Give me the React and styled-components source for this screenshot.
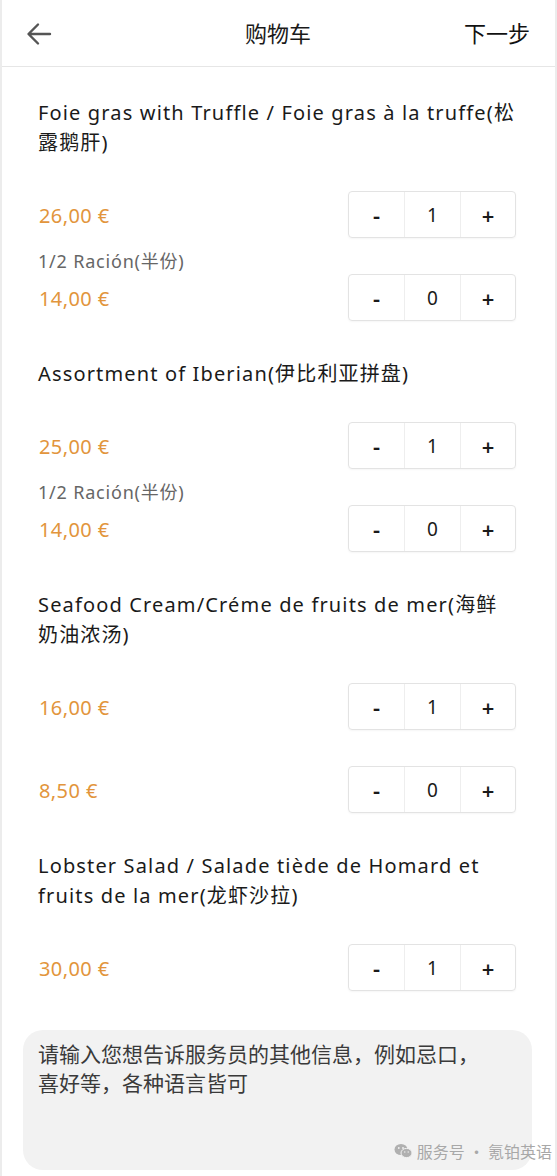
import React from "react";
import styled, { createGlobalStyle } from "styled-components";

const Global = createGlobalStyle`
  html, body { margin: 0; padding: 0; background: #fff; }
  body { font-family: "Noto Sans", "Noto Sans CJK SC", sans-serif; color: #1a1a1a; }
  * { box-sizing: border-box; }
`;

const Page = styled.div`
  width: 557px;
  min-height: 1176px;
  background: #fff;
  border-left: 2px solid #ececec;
  border-right: 2px solid #ececec;
  position: relative;
  display: flex;
  flex-direction: column;
`;

const Header = styled.header`
  height: 67px;
  display: grid;
  grid-template-columns: 1fr auto 1fr;
  align-items: center;
  padding: 0 25px 0 24px;
  border-bottom: 1px solid #e6e6e6;
`;

const BackBtn = styled.div`
  display: flex;
  align-items: center;
  color: #555;
  padding-top: 2px;
`;

const Title = styled.div`
  font-size: 22px;
  color: #1a1a1a;
  font-family: "Noto Sans CJK SC", sans-serif;
  padding-bottom: 2px;
`;

const Next = styled.div`
  justify-self: end;
  font-size: 22px;
  color: #111;
  font-family: "Noto Sans CJK SC", sans-serif;
  padding-bottom: 2px;
`;

const List = styled.div`
  display: flex;
  flex-direction: column;
  gap: 36px;
  padding: 29px 30px 0 36px;
`;

const Item = styled.section`
  display: flex;
  flex-direction: column;
  gap: 33px;
`;

const ItemName = styled.div`
  display: flex;
  flex-direction: column;
  padding-top: 2px;
  font-size: 20px;
  line-height: 30px;
  color: #1a1a1a;
  letter-spacing: 1.15px;
`;

const NameLine = styled.span`
  white-space: nowrap;
`;

const Rows = styled.div`
  display: flex;
  flex-direction: column;
  padding-right: 8px;
`;

const Row = styled.div`
  display: flex;
  align-items: center;
  justify-content: space-between;
  height: 47px;
`;

const Price = styled.div`
  font-size: 20px;
  letter-spacing: 0.4px;
  color: #e2953c;
  padding-left: 1px;
  padding-top: 2px;
`;

const Portion = styled.div`
  height: 36px;
  display: flex;
  align-items: center;
  padding-top: 8px;
  font-size: 18px;
  letter-spacing: 0.8px;
  color: #666;
`;

const Stepper = styled.div`
  display: grid;
  grid-template-columns: 55px 56px 55px;
  height: 47px;
  border: 1px solid #e3e3e3;
  border-radius: 4px;
  box-shadow: 0 1px 2px rgba(0,0,0,0.04);
  margin-right: 1px;
`;

const Cell = styled.div`
  display: flex;
  align-items: center;
  justify-content: center;
  font-size: ${(p) => (p.$num ? "19px" : "22px")};
  font-weight: ${(p) => (p.$num ? 400 : 600)};
  color: #1a1a1a;
  border-left: ${(p) => (p.$first ? "none" : "1px solid #eee")};
`;

const Note = styled.div`
  margin: 39px 23px 6px 21px;
  height: 140px;
  background: #f2f2f2;
  border-radius: 20px;
  padding: 9px 40px 10px 15px;
  font-size: 21px;
  line-height: 29px;
  color: #3a3a3a;
  font-family: "Noto Sans CJK SC", sans-serif;
`;

const Watermark = styled.div`
  position: absolute;
  right: 3px;
  bottom: 13px;
  display: flex;
  align-items: center;
  gap: 4px;
  font-size: 16px;
  color: #a8a8a8;
  font-family: "Noto Sans CJK SC", sans-serif;
`;

const Arrow = () => (
  <svg width="26" height="24" viewBox="0 0 26 24" fill="none">
    <path d="M24 12H3M12 2.5L2.5 12L12 21.5" stroke="#555" strokeWidth="2.4" strokeLinecap="round" strokeLinejoin="round" />
  </svg>
);

const WeChat = () => (
  <svg width="19" height="16" viewBox="0 0 19 16">
    <ellipse cx="7" cy="6.5" rx="6.5" ry="5.5" fill="#b0b0b0" />
    <ellipse cx="12.5" cy="10" rx="5.5" ry="4.6" fill="#b0b0b0" stroke="#f2f2f2" strokeWidth="1" />
    <circle cx="4.8" cy="5" r="0.9" fill="#f2f2f2" />
    <circle cx="9" cy="5" r="0.9" fill="#f2f2f2" />
    <circle cx="10.8" cy="9" r="0.7" fill="#f2f2f2" />
    <circle cx="14.2" cy="9" r="0.7" fill="#f2f2f2" />
  </svg>
);

const Qty = ({ n }) => (
  <Stepper>
    <Cell $first>-</Cell>
    <Cell $num>{n}</Cell>
    <Cell>+</Cell>
  </Stepper>
);

const items = [
  {
    name: ["Foie gras with Truffle / Foie gras à la truffe(松", "露鹅肝)"],
    rows: [
      { price: "26,00 €", qty: 1 },
      { label: "1/2 Ración(半份)", price: "14,00 €", qty: 0 },
    ],
  },
  {
    name: ["Assortment of Iberian(伊比利亚拼盘)"],
    rows: [
      { price: "25,00 €", qty: 1 },
      { label: "1/2 Ración(半份)", price: "14,00 €", qty: 0 },
    ],
  },
  {
    name: ["Seafood Cream/Créme de fruits de mer(海鲜", "奶油浓汤)"],
    rows: [
      { price: "16,00 €", qty: 1 },
      { label: "", price: "8,50 €", qty: 0 },
    ],
  },
  {
    name: ["Lobster Salad / Salade tiède de Homard et", "fruits de la mer(龙虾沙拉)"],
    rows: [{ price: "30,00 €", qty: 1 }],
  },
];

export default function App() {
  return (
    <Page>
      <Global />
      <Header>
        <BackBtn><Arrow /></BackBtn>
        <Title>购物车</Title>
        <Next>下一步</Next>
      </Header>
      <List>
        {items.map((it, i) => (
          <Item key={i}>
            <ItemName>
              {it.name.map((l, k) => (
                <NameLine key={k}>{l}</NameLine>
              ))}
            </ItemName>
            <Rows>
              {it.rows.map((r, j) => (
                <React.Fragment key={j}>
                  {j > 0 && <Portion>{r.label}</Portion>}
                  <Row>
                    <Price>{r.price}</Price>
                    <Qty n={r.qty} />
                  </Row>
                </React.Fragment>
              ))}
            </Rows>
          </Item>
        ))}
      </List>
      <Note>请输入您想告诉服务员的其他信息，例如忌口，喜好等，各种语言皆可</Note>
      <Watermark><WeChat />服务号 · 氪铂英语</Watermark>
    </Page>
  );
}
